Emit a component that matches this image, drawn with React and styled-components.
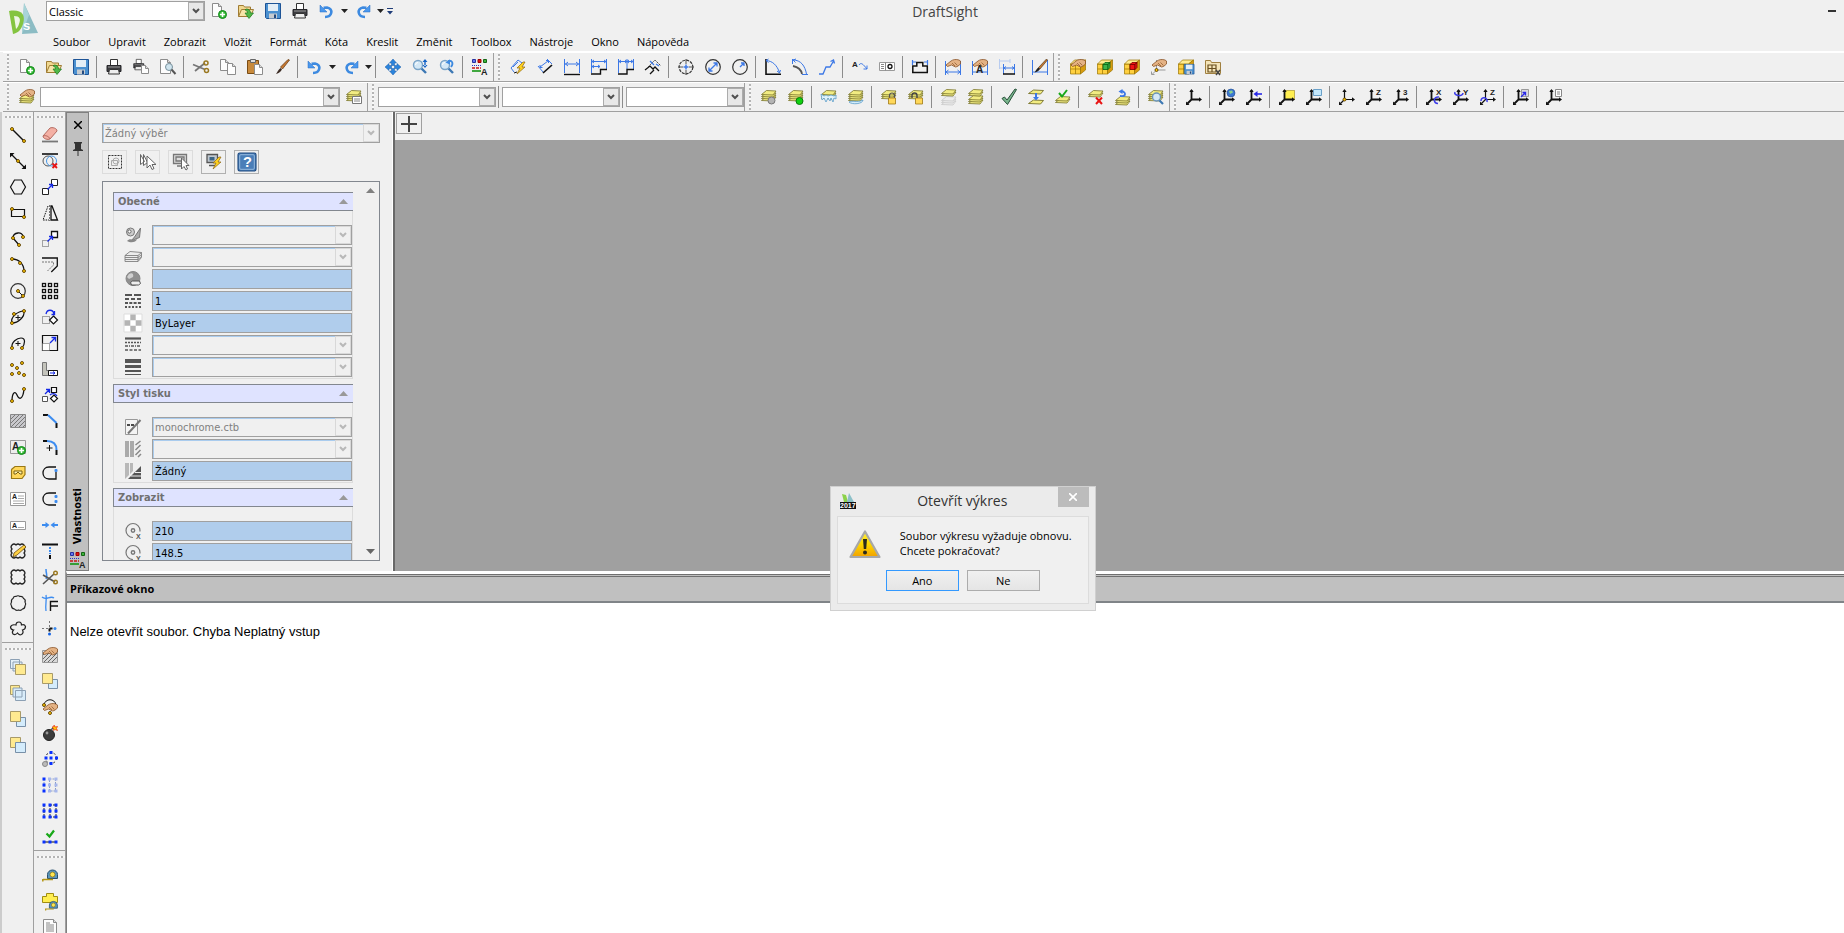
import React from 'react'
import styled, { createGlobalStyle } from 'styled-components'

/* ---------- icon building blocks, all on a 16x16 grid ---------- */

const BLUE = '#3c78e6'

const Dot = ({ x, y }) => <circle cx={x} cy={y} r="1.5" fill="#ffc800" stroke="#5a3c00" strokeWidth=".9" />

const Txt = ({ x, y, s = 7, c = '#222', children }) => (
  <text x={x} y={y} fontSize={s} fontWeight="bold" fill={c} stroke="none" fontFamily="Liberation Sans, sans-serif">{children}</text>
)

const Line = ({ d, c = '#111', w = 1, dash, f = 'none' }) => (
  <path d={d} fill={f} stroke={c} strokeWidth={w} strokeDasharray={dash} />
)

const Plus = () => (
  <g>
    <circle cx="11.5" cy="11.5" r="4" fill="#34b836" stroke="#128a1a" />
    <Line d="M11.5 9v5M9 11.5h5" c="#fff" w={1.6} />
  </g>
)

const Page = ({ x = 1, y = 0, w = 10, h = 14 }) => (
  <g transform={`translate(${x} ${y})`}>
    <path d={`M.5 .5h${w - 4}l3 3v${h - 4}h-${w - 1}z`} fill="#fdfdfd" stroke="#8c8c8c" />
    <path d={`M${w - 3.5} .5v3h3`} fill="#ddd" stroke="#8c8c8c" />
  </g>
)

const Printer = () => (
  <g>
    <path d="M4.5 .5h7v6h-7z" fill="#fff" stroke="#333" />
    <path d="M1 6.5h14v6h-14z" fill="#3c3c40" stroke="#26262a" />
    <path d="M2 8h12" stroke="#9a9a9a" />
    <path d="M3.5 10.5h9l1 4.5h-11z" fill="#eee" stroke="#333" />
  </g>
)

const Glass = () => (
  <g>
    <Line d="M9 9l5 5" c="#3c78b4" w={2.4} />
    <circle cx="6" cy="6" r="4.5" fill="#d4e8f6" stroke="#7aa4c8" strokeWidth="1.4" />
    <path d="M3.5 6a2.5 2.5 0 0 1 2.5-2.5" stroke="#fff" fill="none" />
  </g>
)

const Bolt = () => <path d="M13 3l-6 6h3l-3 6l8-7h-3l3-5z" fill="#ffd21e" stroke="#8c6414" strokeWidth=".7" />

const Hand = ({ y = 0 }) => (
  <g transform={`translate(0 ${y})`}>
    <path d="M1 6l5-4c2-1.5 5-2 8-1l1.5 1v3l-3 2.5l-2 .5l-4-2l-4 1.5z" fill="#e4b284" stroke="#8a5428" strokeWidth=".8" />
    <path d="M7 4l3 3M9.5 3.5l3 3" stroke="#8a5428" strokeWidth=".7" />
  </g>
)

const Stack = ({ y = 0, n = 4, c = '#f2ec82', e = '#77722a' }) => (
  <g transform={`translate(0 ${y})`}>
    {Array.from({ length: n }, (_, i) => n - 1 - i).map(i => (
      <path key={i} d={`M.5 ${5.5 + i * 2}l5-4l9.5 .5l-3 4z`} fill={c} stroke={e} strokeWidth=".8" />
    ))}
  </g>
)

const Sheet = ({ y = 0, c = '#f2ec82', e = '#77722a' }) => (
  <path d={`M.5 ${y + 4.5}l5-3.5l10 .5l-3 3.5z`} fill={c} stroke={e} strokeWidth=".9" />
)

const Lock = () => (
  <g>
    <path d="M8.5 9V6.5a2.5 2.5 0 0 1 5 0V9" fill="none" stroke="#555" strokeWidth="1.2" />
    <path d="M7.5 9h7v6h-7z" fill="#ffd85a" stroke="#a07814" strokeWidth=".8" />
  </g>
)

const Cube = () => (
  <g stroke="#9a7400" strokeWidth=".7">
    <path d="M.5 5h10v10h-10z" fill="#ffd040" />
    <path d="M.5 5l4-4h11l-5 4z" fill="#ffec90" />
    <path d="M10.5 5l5-4v10l-5 4z" fill="#d89c10" />
    <path d="M5.5 5v10M.5 10h10" fill="none" />
  </g>
)

const SmallCube = ({ c, d }) => (
  <g stroke={d} strokeWidth=".8">
    <path d="M6 5.5h5v5h-5z" fill={c} />
    <path d="M6 5.5l2-2h5l-2 2zM11 5.5l2-2v5l-2 2z" fill={c} />
  </g>
)

const Axes = ({ thin }) => (
  <g>
    <Line d="M5.5 1v9.5h8.5M5.5 10.5L1.5 14.5" w={thin ? 1.2 : 1.8} />
    <path d="M5.5 0l2.2 3h-4.4zM16 10.5l-3 2.2v-4.4zM0 16v-3.5l3.5 3.5z" fill="#111" />
  </g>
)

const Undo = () => (
  <g>
    <path d="M6 14c7 0 9-8 2-9.5l-3.5 .2" fill="none" stroke="#3d8ae0" strokeWidth="2.6" />
    <path d="M1 2v7h7z" fill="#4a98ee" stroke="#2a6cc0" strokeWidth=".5" />
  </g>
)

const Swatches = () => (
  <g>
    <path d="M.5 .5h3v3h-3z" fill="#6478f0" stroke="#2832a0" />
    <path d="M6 .5h3v3h-3z" fill="#e01414" stroke="#a00000" />
    <path d="M11.5 .5h3v3h-3z" fill="#3cb43c" stroke="#146414" />
    <Line d="M0 6.5h9" c="#2832c8" dash="1 1" />
    <Line d="M0 9h9" c="#c81414" w={1.4} dash="3 1" />
    <Line d="M0 12h9" c="#149614" w={1.6} />
    <Txt x={9} y={15.5} s={9}>A</Txt>
  </g>
)

const Floppy = ({ x = 0, y = 0, k = 1 }) => (
  <g transform={`translate(${x} ${y}) scale(${k})`}>
    <path d="M.5 .5h15v15h-14l-1-1z" fill="#4a90d0" stroke="#1e5496" />
    <path d="M3 1h10v7h-10z" fill="#e4eef6" />
    <path d="M4 10.5h8v5h-8z" fill="#c8ccd0" />
    <path d="M9 11.5h2v3.5h-2z" fill="#224a80" />
  </g>
)

const Tape = () => (
  <g>
    <path d="M5.5 11.5v-4a5 4.5 0 0 1 10 0v4z" fill="#5a96be" stroke="#28506e" />
    <circle cx="10.5" cy="7.5" r="2.5" fill="#ffe650" stroke="#806a10" strokeWidth=".7" />
    <Line d="M1 12.5h10M.8 12v2.5" c="#b49614" w={1.5} />
  </g>
)

const Nodes = ({ pts, c = '#0a32ff' }) => pts.map(([x, y]) => <rect key={`${x}-${y}`} x={x} y={y} width="3" height="3" fill={c} />)

const Cloud = ({ d }) => <path d={d} fill="none" stroke="#222" strokeWidth="1.2" />

const icons = {
  new: <><Page /><Plus /></>,
  open: <>
    <path d="M.5 13.5v-11h5l1 1.5h6v3" fill="#f0d890" stroke="#a07c34" />
    <path d="M.5 13.5l3-7h12l-3 7z" fill="#f6e4a8" stroke="#a07c34" />
    <path d="M8 6c3 0 4.5 1.5 4.5 4h3l-4.5 5.5l-4-5.5h2.5c0-2-1-2.5-2.5-3z" fill="#50b848" stroke="#1e7820" strokeWidth=".7" />
  </>,
  save: <Floppy />,
  print: <Printer />,
  printMany: <><g transform="scale(.72)"><Printer /></g><Page x={8} y={6} w={8} h={9} /></>,
  preview: <><Page x={0} w={11} h={15} /><circle cx="9" cy="8" r="3.5" fill="#cfe4ee" stroke="#78909c" /><Line d="M11.5 10.5l4 4.5" c="#555" w={2} /></>,
  cut: <><Line d="M0 5.5l12 5M2 12L12 4" c="#777" w={1.8} /><circle cx="13" cy="4" r="2" fill="none" stroke="#9a7820" strokeWidth="1.5" /><circle cx="13.5" cy="11.5" r="2" fill="none" stroke="#9a7820" strokeWidth="1.5" /></>,
  copy: <><Page x={0} y={0} w={9} h={12} /><Page x={7} y={4} w={9} h={12} /></>,
  paste: <><path d="M.5 1.5h11v13h-11z" fill="#c88a3c" stroke="#7a4c14" /><path d="M3.5 .5h5v3h-5z" fill="#ddd" stroke="#666" /><Page x={7} y={5} w={9} h={11} /></>,
  brush: <><path d="M15.5 1l-7 9l-2-2l7.5-7.5z" fill="#c87830" stroke="#5a3410" strokeWidth=".7" /><path d="M6.5 9l1.500 1.5c-2 3-4 4-6 4.5c1.500-2 2-4 4.500-6z" fill="#3c2c24" /></>,
  undo: <Undo />,
  redo: <g transform="translate(16 0) scale(-1 1)"><Undo /></g>,
  pan: <path d="M8 0l3.5 4h-2v2.5h-3V4h-2zM8 16l3.5-4h-2V9.5h-3V12h-2zM0 8l4-3.5v2h2.5v3H4v2zM16 8l-4-3.5v2H9.5v3H12v2z" fill="#2c84dc" stroke="#1c5ea8" strokeWidth=".5" />,
  zoomUpDown: <><Glass /><path d="M13 0l2.5 3h-5zM13 9l2.5-3h-5zM12.3 2h1.4v5h-1.4z" fill="#1464c8" /></>,
  zoomBack: <><Glass /><Line d="M9 2c4-1 6 2 3 6" c="#3d8ae0" w={1.8} /><path d="M6.5 3.5l4.5-3v5z" fill="#3d8ae0" /></>,
  swatches: <Swatches />,

  dimSmart: <><Line d="M1 9L8 1M1 9l3 4M8 1l4 3M3 8l5-5" c={BLUE} /><Line d="M4 14l3-1" /><Bolt /></>,
  dimAligned: <><Line d="M1 7l5 6M10 0l5 5M3 8l8-6M9 1.5h2.5V4M3 6v2.5h2.5" c={BLUE} /><Line d="M6 14l9-8" w={1.6} /></>,
  dimLinear: <><Line d="M.5 0v14M15.5 0v14M1 5h14M4 3L1.5 5L4 7M12 3l2.5 2L12 7" c={BLUE} /><Line d="M0 15.5h16" w={1.4} /></>,
  dimBase: <><Line d="M.5 0v14M15.5 0v10M1 2.5h14M1 7.5h8M3 1L1 2.5L3 4M13 1l2 1.5l-2 1.5M3 6L1 7.5L3 9M7 6l2 1.5L7 9" c={BLUE} /><Line d="M0 15h9.5V10.5H16" w={1.4} /></>,
  dimCont: <><Line d="M.5 0v14M9 0v10M15.5 0v10M1 2.5h14M3 1L1 2.5L3 4M7 1l2 1.5L7 4M11 1L9 2.5L11 4M13 1l2 1.5l-2 1.5" c={BLUE} /><Line d="M0 15h9V10.5H16" w={1.4} /></>,
  dimOblique: <><Line d="M0 11l5-4l3 3l2-2l4 4M5 15L9 11" w={1.3} /><Line d="M3 8l7-7l6 6" dash="2 1" c="#444" /><Line d="M5 2l4 4M11 5l3 2" c={BLUE} w={1.2} /></>,
  dimCenter: <><circle cx="8" cy="8" r="6.8" fill="none" stroke="#333" strokeWidth="1.2" strokeDasharray="3 1" /><Line d="M8 0v5M8 11v5M0 8h5M11 8h5" c="#555" /><Line d="M5.5 8h5M8 5.5v5" c={BLUE} w={1.5} /></>,
  dimDiameter: <><circle cx="8" cy="8" r="7.3" fill="none" stroke="#333" strokeWidth="1.2" /><Line d="M4 12l8-8M8.5 4H12v3.5M4 8.5V12h3.5" c={BLUE} w={1.3} /></>,
  dimRadius: <><circle cx="8" cy="8" r="7.3" fill="none" stroke="#333" strokeWidth="1.2" /><Line d="M8 8l4-4M9 4h3v3" c={BLUE} w={1.3} /></>,
  dimAngle: <><Line d="M1 0v15.3h15" w={1.6} /><Line d="M1 1.5c7 .5 11 5 13.5 12M3.5 0L1 1.5l2.5 2M12 12l2.5 2l1-3" c={BLUE} /></>,
  dimArc: <><Line d="M1 7c5 1 8 3 9 8" c="#555" w={1.8} /><Line d="M1 1c8 0 12 6 13.5 14M.5 0v5M10 15.5h6M4 0L1 1l2.5 2.5" c={BLUE} /></>,
  dimJog: <Line d="M0 15h4L7 8h4l3.5-6M11.5 2.5L14.5 1l1 3.5" c={BLUE} w={1.3} />,
  leader: <><Txt x={0} y={8} s={8}>A</Txt><Line d="M7 6c2-3 4-1 8 4M15 6.5V10h-3.500" c={BLUE} /></>,
  tolerance: <><path d="M.5 3.5h15v8h-15z" fill="#fff" stroke="#999" /><Line d="M2 5.5h3M2 7.5h3M2 9.5h3M6.5 3.5v8" c="#888" /><circle cx="11" cy="7.5" r="2" fill="none" stroke="#111" strokeWidth="1.3" /></>,
  dimJogLine: <><Line d="M0 13.5h16M.8 13v-6h4v-3.5h6V7h4.5v6" w={1.5} /><Line d="M.5 1v5M15.5 1v5M1 3h3M12 3h3" c={BLUE} w={1.2} /></>,
  dimEdit: <><Line d="M.5 2v14M15.5 2v14M1 13h14M3.5 11L1 13l2.5 2M12.5 11l2.5 2l-2.5 2" c={BLUE} /><Hand /></>,
  dimTextEdit: <><Line d="M.5 2v14M15.5 2v14M1 13h14" c={BLUE} /><Hand /><Txt x={4} y={14} s={10}>A</Txt></>,
  dimUpdate: <><Line d="M.5 0v10M11 0v4M1 2h10M1 9h4" c="#b8ccf0" /><Line d="M4.5 5v10M15.5 5v10M5 9h10M7 7.5L5 9l2 1.5M13 7.5L15 9l-2 1.5" c={BLUE} /><Line d="M4 15h12" w={1.5} /></>,
  dimStyle: <><Line d="M.5 1v15M15.5 1v15M1 13h14" c={BLUE} /><path d="M14.500 0l1 1L8 10L6.500 8.500z" fill="#c87830" stroke="#3c2c14" strokeWidth=".6" /><path d="M6.500 8.500L8 10c-1 2-3 3-5.500 3.500c1.500-2 2-4 4-5z" fill="#222" /></>,

  cubeHand: <><Cube /><Hand /></>,
  cubeGreen: <><Cube /><SmallCube c="#3cb44a" d="#0a6414" /></>,
  cubeRed: <><Cube /><SmallCube c="#f01414" d="#780000" /></>,
  origin: <><Line d="M5.5 1v10h9M5.5 11l-4 4M.5 12.500v3h3" c="#999" /><Hand /><Dot x={5.5} y={11} /></>,
  cubeSave: <><Cube /><Floppy x={6} y={5} k={0.65} /></>,
  cubeX: <><path d="M.5 14.5v-13h5l1 2h9v11z" fill="#f4e4b8" stroke="#a08040" /><path d="M3 6h8v7h-8zM7 6v7M3 9.5h8" fill="none" stroke="#6a5020" strokeWidth="1.2" /><Line d="M11 11l4 5M15 11l-4 5" c="#444" w={1.5} /></>,

  layerHand: <><Stack y={4} n={3} /><Hand /></>,
  layerProps: <><Stack y={0} n={4} /><path d="M6.5 7.5h9v7h-9z" fill="#fff" stroke="#777" /><Line d="M8 10h6M8 12h6" c="#888" /></>,
  layerOff: <><Stack y={0} n={4} /><circle cx="10.5" cy="11.5" r="3.5" fill="#b4b4b4" stroke="#777" /></>,
  layerOn: <><Stack y={0} n={4} /><circle cx="11.5" cy="12" r="3.5" fill="#10d010" stroke="#0a7a0a" /></>,
  layerFreeze: <><Stack y={0} n={3} /><path d="M0 5l3 2l2-1l2 1l3-1l3 1l2-1v4l-2-1l-1 4l-2-4l-1 3l-2-3l-2 4l-2-4l-2 2z" fill="#dff2fc" stroke="#5a9cc8" strokeWidth=".8" /></>,
  layerThaw: <><Stack y={0} n={4} /><path d="M1 13c3-2 8 1 14-2c0 4-11 5-14 2z" fill="#d4ecfa" stroke="#5a9cc8" strokeWidth=".8" /></>,
  layerLock: <><Stack y={0} n={3} /><Lock /></>,
  layerUnlock: <><Stack y={0} n={3} /><path d="M7.5 9h7v6h-7z" fill="#ffd85a" stroke="#a07814" strokeWidth=".8" /><Line d="M4 9V6.5a2.5 2.5 0 0 1 5 0V9" c="#444" w={1.4} /></>,
  layerIso: <><Stack y={6} n={3} c="#ececec" e="#c8c8c8" /><Stack y={-1} n={2} /></>,
  layerAll: <><Stack y={5} n={3} /><Stack y={-1} n={2} /></>,
  check: <path d="M1 9.5l2.5-1.5l2.5 3l8-11l1.5 .5l-9 15z" fill="#78b48c" stroke="#28503a" />,
  layerMerge: <><Sheet y={10} /><Sheet y={0} /><Line d="M8 4v5" c={BLUE} w={2} /><path d="M5 8h6l-3 3.5z" fill={BLUE} /></>,
  layerCheck: <><Stack y={6} n={2} /><Line d="M4 4l3 3.5l5-6.500" c="#18a818" w={2} /></>,
  layerDelete: <><Stack y={0} n={2} /><Line d="M8 8.500l6 6.5M14 8.500l-6 6.5" c="#e81414" w={2} /></>,
  layerBack: <><Stack y={6} n={3} /><Line d="M5 7c6 1 7-4 1-5" c={BLUE} w={1.8} /><path d="M3.5 2.5l4-2.5v5z" fill={BLUE} /></>,
  layerFind: <><Stack y={0} n={4} /><Line d="M11 11l4 4" c="#3c78b4" w={2.2} /><circle cx="8.5" cy="8" r="4" fill="#d4e8f6" stroke="#6a94b8" strokeWidth="1.4" /></>,

  ccs: <Axes />,
  ccsWorld: <><Axes /><circle cx="12" cy="4" r="4" fill="#3c78d2" stroke="#224a8c" strokeWidth=".6" /><path d="M10 2l3-.5l1 2l-3 1.5z" fill="#8cd28c" /></>,
  ccsPrev: <><Axes /><Line d="M9 5h7" c="#2828e8" w={1.6} /><path d="M7.5 5l4-3v6z" fill="#2828e8" /></>,
  ccsEntity: <><path d="M5.500 1.5h10v9h-10z" fill="#ffee50" stroke="#8a7000" strokeDasharray="1 1" /><Axes /></>,
  ccsView: <><Axes /><path d="M7.5 .5h8v6h-8z" fill="#c4e8fc" stroke="#6aa0c8" /></>,
  ccsOrigin: <><Axes thin /><Dot x={5.5} y={10.5} /></>,
  ccsZ: <><Axes /><Txt x={10} y={6} s={8}>Z</Txt></>,
  ccs3: <><Axes /><Txt x={10} y={6} s={8}>3</Txt></>,
  ccsRotX: <><Axes /><Txt x={10} y={6} s={8}>X</Txt><Line d="M13 8c-6-1-6 6-1 6.5" c="#3c3ce8" w={1.5} /></>,
  ccsRotY: <><Axes /><Txt x={10} y={6} s={8}>Y</Txt><Line d="M2 3c-2 4 8 5 8 1" c="#3c3ce8" w={1.5} /></>,
  ccsRotZ: <><Axes thin /><Txt x={10} y={6} s={8}>Z</Txt><Line d="M1 12c0-5 7-4 6 1" c="#3c3ce8" w={1.5} /></>,
  ccsApply: <><Axes /><path d="M8.5 .5h7v7h-7z" fill="#d8d8e0" stroke="#999" /><Line d="M8 8l4-4M9.500 3.500h3v3" c="#2828e8" w={1.3} /></>,
  ccsNamed: <><Axes /><path d="M9.5 .5h6v7h-6z" fill="#fff" stroke="#888" /><Line d="M11 3h3M11 5h3" c="#888" /></>,

  line: <><Line d="M2 2l12 12" w={1.4} /><Dot x={2} y={2} /><Dot x={14} y={14} /></>,
  infinite: <><Line d="M1 1l14 14" w={1.3} /><path d="M0 0h4.5l-4.5 4.5zM16 16v-4.5l-4.5 4.5z" fill="#111" /><Dot x={8} y={8} /></>,
  polygon: <Line d="M4.5 1h7l4 7l-4 7h-7l-4-7z" w={1.2} />,
  rect: <><Line d="M1.5 4.5h13v7h-13z" w={1.2} /><Dot x={2} y={4} /><Dot x={14} y={12} /></>,
  polyline: <><Line d="M9 14L3 7c0-6 10-7 10-1" w={1.3} /><Dot x={9} y={14} /><Dot x={3} y={7} /><Dot x={13} y={6} /></>,
  arc: <><Line d="M2 2c7 0 12 5 12 12" w={1.3} /><Dot x={2} y={2} /><Dot x={10} y={6} /><Dot x={14} y={14} /></>,
  circle: <><circle cx="8" cy="8" r="7.3" fill="none" stroke="#333" strokeWidth="1.2" /><Line d="M8 8l5 5" /><Dot x={8} y={8} /><Dot x={13} y={13} /></>,
  ellipse: <><Line d="M2 14c-2-6 6-12 12-12c1 6-6 12-12 12z" w={1.2} /><Line d="M8 6v5M5.5 8.5h5" /><Dot x={14} y={2} /><Dot x={2} y={14} /><Dot x={4} y={5} /></>,
  ellipseArc: <><Line d="M2 13c-1-6 5-10 9-10c5 0 4 6 1 10" w={1.2} /><Line d="M8 6v5M5.5 8.5h5" /><Dot x={2} y={13} /><Dot x={12} y={13} /></>,
  points: <><Dot x={2} y={4} /><Dot x={12} y={2} /><Dot x={7} y={7} /><Dot x={2} y={13} /><Dot x={9} y={12} /><Dot x={14} y={14} /></>,
  spline: <><Line d="M2 14C2 6 5 3 7 8s6 5 7-6" w={1.3} /><Dot x={2} y={14} /><Dot x={14} y={2} /></>,
  hatch: <><path d="M.5 1.5h15v13h-15z" fill="#c8c8cc" stroke="#888" /><Line d="M1 6l4-4M1 10l8-8M1 14l12-12M5 14L15 4M9 14l6-6M13 14l2-2" c="#777" /></>,
  noteAdd: <><path d="M.5 1.5h15v13h-15z" fill="#eee" stroke="#999" /><Txt x={2} y={11} s={10}>A</Txt><Plus /></>,
  block: <><path d="M2 4l3-2.5h10v8l-3 4H1.5V5z" fill="#ffd75a" stroke="#9a7814" strokeWidth="1.2" /><path d="M4 9v-3h8v3h-2l-2-2l-2 2z" fill="#fff3b0" stroke="#7a6010" /></>,
  note: <><path d="M.5 1.5h15v13h-15z" fill="#fff" stroke="#999" /><Txt x={2} y={8} s={7}>A</Txt><Line d="M8 5h6M8 7.5h6M3 10h11M3 12.5h11" c="#aaa" /></>,
  simpleNote: <><path d="M.5 4.5h15v8h-15z" fill="#fff" stroke="#999" /><Txt x={2} y={11} s={7}>A</Txt><Line d="M8 10.5h6" c="#aaa" /></>,
  sketch: <><Cloud d="M2 2q2-2 4 0q2-2 4 0q2-2 4 0q2 2 0 4q2 2 0 4q2 2 0 4q-2 2-4 0q-2 2-4 0q-2 2-4 0q-2-2 0-4q-2-2 0-4q-2-2 0-4" /><path d="M14 2l2 2L7 12l-4 2l1-4z" fill="#ffd040" stroke="#6a4c10" strokeWidth=".8" /></>,
  cloudRect: <Cloud d="M2 2q2-2 4 0q2-2 4 0q2-2 4 0q2 2 0 4q2 2 0 4q2 2 0 4q-2 2-4 0q-2 2-4 0q-2 2-4 0q-2-2 0-4q-2-2 0-4q-2-2 0-4" />,
  cloudRound: <Cloud d="M6 1.5q2-1.5 4 0q3-.5 3.5 2q2.5 1 1.5 3.5q1.5 2 0 4q0 2.5-2.5 3q-1.5 2-4 1q-2.5 1-4-1q-3-.5-3-3q-1.5-2 0-4q-.5-2.5 1.5-3.5q.5-2.5 3-2" />,
  cloudFree: <Cloud d="M6 4q0-3 3-3q2.5 0 2.5 3q3-1 4 1.5q0 3-3 3.5q1.5 3-1 4.5q-2.5 1-4-1.5q-2 2.5-4.5 1q-1.5-2 .5-4q-3-.5-3-3q1-3 5.500-2z" />,
  frontSq: <><path d="M6.5 6.5h9v9h-9z" fill="#d4ecfc" stroke="#7890a8" /><path d="M.5 .5h10v10h-10z" fill="#ffea90" stroke="#a89a68" /></>,
  backSq: <><path d="M.5 .5h10v10h-10z" fill="#ffea90" stroke="#a89a68" /><path d="M5.5 5.5h10v10h-10z" fill="#d4ecfc" stroke="#7890a8" /></>,
  aboveSq: <><path d="M.5 .5h9v9h-9zM3 3h9v9h-9z" fill="#e4f0f8" stroke="#8ca0b4" /><path d="M5.5 5.5h10v10h-10z" fill="#ffea90" stroke="#a89a68" /></>,
  underSq: <><path d="M.5 .5h9v9h-9z" fill="#ffea90" stroke="#a89a68" /><path d="M3 3h9v9h-9zM5.5 5.5h10v10h-10z" fill="#d8ecfa" stroke="#8ca0b4" /></>,

  eraser: <><path d="M1 9l7-8c2-1 7 0 7 3l-7 8c-2 1-7 0-7-3z" fill="#f4b0a4" stroke="#b46a60" /><path d="M1 9c2-1 6 0 7 3" fill="none" stroke="#b46a60" /><Line d="M0 14.5h16" c="#777" w={1.8} /></>,
  discard: <><Line d="M0 1h16" w={1.6} /><circle cx="6" cy="8" r="5" fill="none" stroke="#555" /><circle cx="9.5" cy="8" r="5" fill="none" stroke="#4696e6" /><Line d="M10.500 10.500l4.500 4.500M15 10.500l-4.500 4.500" c="#e81414" w={1.8} /></>,
  copyObj: <><path d="M.5 9.5h6v6h-6zM9.5 .5h6v6h-6z" fill="#fff" stroke="#222" /><Line d="M5.5 10.5L10.5 5.5M7 5.5h3.5V9" c="#1428e6" w={1.3} /></>,
  mirror: <><Line d="M6 1L1 15h6" dash="1.5 1" /><Line d="M7.5 0v16" c="#777" dash="2 1" /><path d="M9 1h1l5.5 14h-6.5z" fill="none" stroke="#111" strokeWidth="1.3" /></>,
  move: <><path d="M.5 9.5h6v6h-6z" fill="none" stroke="#555" strokeDasharray="1 1" /><path d="M9.5 .5h6v6h-6z" fill="#fff" stroke="#111" strokeWidth="1.3" /><Line d="M5.5 10.5L10.5 5.5M7 5.5h3.5V9" c="#1428e6" w={1.3} /></>,
  offset: <><Line d="M0 1h15.3v8l-6 6" w={1.3} /><Line d="M0 5h11.5v3l-6 6" c="#777" dash="2 1" /></>,
  pattern: <g fill="#fff" stroke="#111" strokeWidth="1.3">{[1, 7, 13].map(y => [1, 7, 13].map(x => <rect key={`${x}${y}`} x={x - 0.5} y={y - 0.5} width="3" height="3" />))}</g>,
  rotate: <><path d="M.5 7.5h7v7h-7z" fill="none" stroke="#555" strokeDasharray="1 1" /><path d="M11.5 7l4 4l-4 4l-4-4z" fill="#fff" stroke="#111" strokeWidth="1.2" /><Line d="M4 5c1-5 7-5 8 0M12.5 2v3.5h-3" c="#1428e6" w={1.3} /></>,
  scale: <><path d="M.5 .5h15v15h-15z" fill="none" stroke="#111" strokeWidth="1.2" /><path d="M.5 8.5h7v7h-7z" fill="#fff" stroke="#555" strokeDasharray="1 1" /><Line d="M8 8l5-5M9.5 2.5h4v4" c="#1428e6" w={1.3} /></>,
  stretch: <><path d="M.5 1.5h4v8h11v5h-15z" fill="#c4c4bc" stroke="#777" /><path d="M6.5 9.5h9v5h-9z" fill="#fff" stroke="#111" /><Line d="M8 12h5M11 10.5l2 1.5l-2 1.5" c="#1428e6" /></>,
  copyRotate: <><path d="M.5 9.5h5v5h-5z" fill="#fff" stroke="#555" /><path d="M9.5 .5h5v5h-5zM12 8l3.5 3.5L12 15l-3.5-3.5z" fill="#fff" stroke="#111" strokeWidth="1.2" /><Line d="M3 7l4-4M4 2.5h3.5V6M8 8c2-2 5-2 7 1" c="#1428e6" w={1.3} /></>,
  chamfer: <><Line d="M1 2h5M14.5 10v5" w={2} /><Line d="M6 2l8.5 8" c="#3c8cf0" w={2} /></>,
  fillet: <><Line d="M1 2h4M14.5 11v5" w={2} /><Line d="M5 2c6 0 9.5 3 9.5 9" c="#3c8cf0" w={2} /><Line d="M7.5 6v6M4.5 9h6" /></>,
  open1: <><Line d="M14 2H7C-1 2-1 14 7 14h7v-7" w={1.3} /><rect x="12.5" y="4" width="3" height="3" rx="1" fill="#3c8cf0" /></>,
  open2: <><Line d="M14 2H7C-1 2-1 14 7 14h7" w={1.3} /><rect x="12.5" y="4" width="3" height="3" rx="1" fill="#3c8cf0" /><rect x="12.5" y="9" width="3" height="3" rx="1" fill="#3c8cf0" /></>,
  weld: <><Line d="M0 8h5M11 8h5" c="#3c8cf0" w={2} /><path d="M3.5 5l4 3l-4 3zM12.5 5l-4 3l4 3z" fill="#3c8cf0" /></>,
  extend: <><Line d="M0 1.5h16" w={2} /><Line d="M8 4v7" c="#3c8cf0" w={2} dash="2 1" /><Line d="M8 12v4" w={2} /></>,
  trim: <><Line d="M4 0c0 6 2 6 0 10" c="#3c8cf0" w={1.5} /><Line d="M1 15L12 5M1 6l12 7" c="#555" w={1.6} /><circle cx="13.5" cy="4" r="1.8" fill="none" stroke="#9a7820" strokeWidth="1.4" /><circle cx="13.5" cy="13" r="1.8" fill="none" stroke="#9a7820" strokeWidth="1.4" /></>,
  powerTrim: <><Line d="M0 2c4 4 8-2 12 1M4 0c1 5-1 9 0 16" c="#3c8cf0" w={1.3} /><Line d="M16 6.5H8.5V16M16 11H8.5" w={1.4} /></>,
  corner: <><Line d="M7.5 0v16M0 7.5h16" c="#777" dash="2 2" /><Line d="M7.5 7.5h3M7.5 7.5v3" w={2} /><circle cx="13" cy="7.5" r="1.5" fill="#3c8cf0" /><circle cx="7.5" cy="13" r="1.5" fill="#1464e6" /></>,
  hatchEdit: <><path d="M.5 3.5h15v12h-15z" fill="#d8d8d8" stroke="#999" /><Line d="M1 8l4-4M1 12l8-8M2 15L13 4M6 15l9-9M10 15l5-5" c="#666" /><Hand /></>,
  polyEdit: <><Line d="M2 6c1-7 11-7 12 0" /><Hand y={4} /><Dot x={2} y={6} /><Dot x={8} y={14} /></>,
  bomb: <><circle cx="7" cy="10" r="5.5" fill="#3c3c3c" stroke="#222" /><circle cx="5" cy="8" r="1.4" fill="#999" /><Line d="M9 5l2-2l2 0" c="#555" w={1.5} /><path d="M12 0l1 2l2.5-.5l-1 2l1 2l-2.5-1l-1.5 1v-2l-1.5-1.5l2-.5z" fill="#ffc800" stroke="#e83214" strokeWidth=".7" /></>,
  circPattern: <><circle cx="9" cy="7" r="5.5" fill="none" stroke="#222" strokeDasharray="2 2" /><Nodes pts={[[7.5, 0], [2.5, 5.5], [7.5, 5.5], [13, 5.5], [7.5, 11]]} /><circle cx="3" cy="13" r="2.5" fill="#bbb" stroke="#888" /></>,
  gridLeft: <><Line d="M7.5 2h6v12h-6zM2 2v12" c="#8a9cc8" dash="2 1" /><Nodes c="#a8b8ec" pts={[[6, 0.5], [12.5, 0.5], [6, 6.5], [12.5, 6.5], [6, 12.5], [12.5, 12.5]]} /><Nodes pts={[[0.5, 0.5], [0.5, 6.5], [0.5, 12.5]]} /></>,
  gridAll: <><Line d="M2 2v12M8 2v12M14 2v12M8 2h6M8 14h6" c="#222" dash="2 1" /><Nodes pts={[[0.5, 0.5], [6.5, 0.5], [12.5, 0.5], [0.5, 6.5], [6.5, 6.5], [12.5, 6.5], [0.5, 12.5], [6.5, 12.5], [12.5, 12.5]]} /></>,
  gridCheck: <><Line d="M1 13h14" /><Nodes pts={[[0.5, 11.5], [6.5, 11.5], [12.5, 11.5]]} /><Line d="M4.5 4.5l3 3l4.5-6" c="#18a818" w={2.2} /></>,
  tape: <Tape />,
  tapeArea: <><path d="M4.5 .5h7v3h4v6h-15v-6h4z" fill="#ffee50" stroke="#a08c10" /><g transform="translate(3 6) scale(.8)"><Tape /></g></>,
  report: <><Page x={1} y={0} w={14} h={18} /><Line d="M4 4h4M4 6h8M4 8h8M4 10h8M4 12h8" c="#888" /></>,

  selRect: <><path d="M1.5 1.5h13v13h-13z" fill="none" stroke="#333" strokeDasharray="2 1" /><path d="M4.5 6.5h6v5h-6z" fill="none" stroke="#aaa" /><circle cx="9" cy="7" r="3" fill="none" stroke="#aaa" /></>,
  selArrows: <g fill="#fff" stroke="#666"><path d="M.5 .5v10l4-3zM3.5 .5v11l4-3z" /><path d="M7 2v12l3-3l2 4.5l2-1l-2-4h4z" /></g>,
  selWindow: <><path d="M.5 .5h13v9h-13zM3 3h8v4h-8zM4 12h5" fill="#ddd" stroke="#777" strokeWidth="1.3" /><path d="M8.5 4v11l2.5-2.5l2 3.5l1.5-1l-1.5-3.5h3z" fill="#fff" stroke="#666" /></>,
  selQuick: <><path d="M1 .5h10.500v8h-10.500z" fill="#c0c8d0" stroke="#555" strokeWidth="1.3" /><path d="M3.5 3h5v3.5h-5z" fill="#3c6484" /><Line d="M3 11.500h7" c="#555" w={1.5} /><Bolt /></>,
  help: <><rect x="0" y="0" width="16" height="16" rx="1.5" fill="#4a7eb8" stroke="#1e4a80" /><rect x="1.5" y="1.5" width="13" height="13" rx="1" fill="none" stroke="#a8c8e8" strokeWidth=".7" /><Txt x={4.5} y={12.5} s={13} c="#fff">?</Txt></>,

  color: <><circle cx="5.5" cy="5" r="4" fill="#ccc" stroke="#777" /><circle cx="4.5" cy="4.5" r="1.6" fill="#fff" stroke="#666" /><path d="M15.5 1l-6 9l-3 3.5l8-3z" fill="#aaa" stroke="#777" /><path d="M2 14c3-4 6 0 10-2c-1 4-7 4-10 2z" fill="#888" /></>,
  grayStack: <g fill="#ececec" stroke="#808080" strokeWidth=".9"><path d="M0 12.500v-6l5-4l11.500 1v5l-3.500 4z" /><path d="M0 6.500h13l3.500-3M13 6.500v6M0 8.500h13l3.500-3M0 10.500h13l3.500-3" fill="none" /></g>,
  globe: <><circle cx="8" cy="7.5" r="7" fill="#909090" stroke="#888" /><path d="M4 3c3-2 5 0 4 3l-4 2l-2-2z" fill="#d0d0d0" /><path d="M5.5 11.500l2-1.500h7l1 2.500l-2 1.500h-7z" fill="#eee" stroke="#555" /></>,
  lineScale: <g stroke="#555" strokeWidth="1.8"><path d="M0 2h16" strokeDasharray="7 2" /><path d="M0 6h16" strokeDasharray="4 2" /><path d="M0 10h16" strokeDasharray="3 1.3" /><path d="M0 14h16" strokeDasharray="2 1.5" /></g>,
  alpha: <><path d="M-1 -1h18v18h-18z" fill="#fff" stroke="#ddd" /><path d="M5.3 -.5h5.4v5.8h-5.4zM-.5 5.3h5.8v5.4h-5.8zM10.7 5.3h5.8v5.4h-5.8zM5.3 10.7h5.4v5.8h-5.4z" fill="#b4b4b4" /></>,
  lineStyle: <g stroke="#555" strokeWidth="1.6"><path d="M0 1.5h16" strokeWidth="2.2" /><path d="M0 5.5h16" strokeDasharray="2 1" /><path d="M0 9h16" strokeDasharray="3 1 1 1" /><path d="M0 13h16" strokeDasharray="3 1.5" /></g>,
  lineWeight: <path d="M0 0h16v4h-16zM0 6h16v3h-16zM0 11h16v2h-16zM0 15h16v1h-16z" fill="#555" />,
  printStyle: <><path d="M.5 .5h12v15h-12z" fill="#f4f4f4" stroke="#999" /><Line d="M2 6h3M6 6h3" w={1.6} /><Line d="M15.5 1L3 14.5" c="#777" w={2} /></>,
  bars: <><path d="M0 0h4v16H0zM5 0h4v16H5z" fill="#aaa" /><Line d="M10.5 4l5-4M10.5 9l5-5M10.5 14l5-5M13 16l3-3" c="#888" w={1.5} /></>,
  ramp: <><path d="M0 0h4v12l-4 4zM5 0h3v8l-3 3z" fill="#b8b8b8" /><path d="M16 3L3 16h13z" fill="#555" /><Line d="M10 9.500h6M6 13h10" c="#eee" /></>,
  centerX: <><circle cx="8" cy="7.5" r="7" fill="none" stroke="#777" strokeWidth="1.2" strokeDasharray="34 10" strokeDashoffset="-11" /><circle cx="8" cy="7.5" r="1.7" fill="none" stroke="#777" strokeWidth="1.4" /><Txt x={11} y={16} s={7} c="#555">X</Txt></>,
  centerY: <><circle cx="8" cy="7.5" r="7" fill="none" stroke="#777" strokeWidth="1.2" strokeDasharray="34 10" strokeDashoffset="-11" /><circle cx="8" cy="7.5" r="1.7" fill="none" stroke="#777" strokeWidth="1.4" /><Txt x={11} y={16} s={7} c="#555">Y</Txt></>,
}

const Icon = ({ name, size = 16 }) => (
  <svg width={size} height={size} viewBox="0 0 16 16" overflow="visible" fill="none" aria-hidden="true">{icons[name]}</svg>
)

/* ---------- toolbar contents: '|' is a separator, 'v' a drop-down arrow ---------- */

const standardBar = 'new open save | print printMany preview | cut copy paste brush | undo v redo v | pan zoomUpDown zoomBack | swatches'
const dimensionBar = 'dimSmart dimAligned dimLinear dimBase dimCont dimOblique | dimCenter dimDiameter dimRadius | dimAngle dimArc dimJog | leader tolerance | dimJogLine | dimEdit dimTextEdit dimUpdate | dimStyle'
const blockBar = 'cubeHand cubeGreen cubeRed origin cubeSave cubeX'
const layerBar = 'layerOff layerOn | layerFreeze layerThaw | layerLock layerUnlock | layerIso layerAll | check layerMerge layerCheck | layerDelete layerBack | layerFind'
const ccsBar = 'ccs | ccsWorld ccsPrev | ccsEntity ccsView | ccsOrigin ccsZ ccs3 | ccsRotX ccsRotY ccsRotZ | ccsApply | ccsNamed'

const drawBar = 'line infinite polygon rect polyline arc circle ellipse ellipseArc points spline hatch noteAdd block note simpleNote sketch cloudRect cloudRound cloudFree'
const orderBar = 'aboveSq underSq frontSq backSq'
const modifyBar = 'eraser discard copyObj mirror move offset pattern rotate scale stretch copyRotate chamfer fillet open1 open2 weld extend trim powerTrim corner hatchEdit frontSq polyEdit bomb circPattern gridLeft gridAll gridCheck'
const inquiryBar = 'tape tapeArea report'

const menus = ['Soubor', 'Upravit', 'Zobrazit', 'Vložit', 'Formát', 'Kóta', 'Kreslit', 'Změnit', 'Toolbox', 'Nástroje', 'Okno', 'Nápověda']

const groups = [
  {
    title: 'Obecné',
    rows: [
      { icon: 'color', combo: true },
      { icon: 'grayStack', combo: true },
      { icon: 'globe', value: '' },
      { icon: 'lineScale', value: '1' },
      { icon: 'alpha', value: 'ByLayer' },
      { icon: 'lineStyle', combo: true },
      { icon: 'lineWeight', combo: true },
    ],
  },
  {
    title: 'Styl tisku',
    rows: [
      { icon: 'printStyle', combo: true, value: 'monochrome.ctb' },
      { icon: 'bars', combo: true },
      { icon: 'ramp', value: 'Žádný' },
    ],
  },
  {
    title: 'Zobrazit',
    rows: [
      { icon: 'centerX', value: '210' },
      { icon: 'centerY', value: '148.5' },
    ],
  },
]

function Items({ list }) {
  return list.split(' ').map((name, i) => {
    if (name === '|') return <Separator key={i} />
    if (name === 'v') return <DropArrow key={i} aria-label="more"><svg width="7" height="4"><path d="M0 0h7l-3.5 4z" fill="#222" /></svg></DropArrow>
    return <ToolButton key={i} aria-label={name}><Icon name={name} /></ToolButton>
  })
}

function ComboBox({ label, value = '', width, disabled, fill }) {
  return (
    <Combo $width={width} $disabled={disabled} $fill={fill}>
      <ComboSelect aria-label={label} disabled={disabled} defaultValue={value}>
        <option>{value}</option>
      </ComboSelect>
      <ComboArrow $disabled={disabled}>
        <svg width="8" height="6"><path d="M1 1l3 3l3-3" fill="none" stroke={disabled ? '#b8b8b8' : '#505050'} strokeWidth="2" /></svg>
      </ComboArrow>
    </Combo>
  )
}

function Properties() {
  return (
    <Palette>
      <PaletteStrip>
        <StripButton aria-label="close">
          <svg width="8" height="8"><path d="M0 0l8 8M8 0l-8 8" stroke="#000" strokeWidth="1.5" /></svg>
        </StripButton>
        <StripButton aria-label="pin">
          <svg width="10" height="14"><path d="M1 0h8v1l-1 1v5l2 1v1H0V8l2-1V2L1 1zM4.5 9h1v5h-1z" fill="#333" /></svg>
        </StripButton>
        <StripTitle>Vlastnosti</StripTitle>
        <Icon name="swatches" />
      </PaletteStrip>
      <PaletteBody>
        <ComboBox label="selection" value="Žádný výběr" disabled fill />
        <SelectTools>
          <SelectButton disabled aria-label="select by window"><Icon name="selRect" /></SelectButton>
          <SelectButton disabled aria-label="select many"><Icon name="selArrows" /></SelectButton>
          <SelectButton disabled aria-label="select entities"><Icon name="selWindow" /></SelectButton>
          <SelectButton aria-label="quick select"><Icon name="selQuick" /></SelectButton>
          <SelectButton aria-label="help"><Icon name="help" size={18} /></SelectButton>
        </SelectTools>
        <GroupFrame>
          <GroupList>
            {groups.map(group => (
              <Group key={group.title}>
                <GroupHeader>
                  {group.title}
                  <svg width="9" height="5"><path d="M4.5 0l4.5 5h-9z" fill="#999" /></svg>
                </GroupHeader>
                <GroupRows>
                  {group.rows.map(row => (
                    <PropRow key={row.icon}>
                      <PropIcon><Icon name={row.icon} /></PropIcon>
                      {row.combo
                        ? <ComboBox label={row.icon} value={row.value} disabled fill />
                        : <PropInput aria-label={row.icon} defaultValue={row.value} />}
                    </PropRow>
                  ))}
                </GroupRows>
              </Group>
            ))}
          </GroupList>
          <Scroller>
            <svg width="9" height="5"><path d="M4.5 0l4.5 5h-9z" fill="#808080" /></svg>
            <svg width="9" height="5"><path d="M4.5 5l4.5-5h-9z" fill="#666" /></svg>
          </Scroller>
        </GroupFrame>
      </PaletteBody>
    </Palette>
  )
}

function RecoverDialog() {
  return (
    <Dialog role="dialog" aria-labelledby="dialog-title">
      <DialogBar>
        <svg width="18" height="18" viewBox="0 0 18 18">
          <path d="M3 1l4 1l2 7H5z" fill="#8cd24a" />
          <path d="M10 0l5 9H8z" fill="#8cc0c8" />
          <path d="M1 9h16v7H1z" fill="#111" />
          <text x="1" y="15" fontSize="7" fontWeight="bold" fill="#fff" fontFamily="Liberation Sans, sans-serif">2017</text>
        </svg>
        <DialogTitle id="dialog-title">Otevřít výkres</DialogTitle>
        <DialogClose aria-label="close">
          <svg width="8" height="8"><path d="M0 0l8 8M8 0l-8 8" stroke="#fff" strokeWidth="1.6" /></svg>
        </DialogClose>
      </DialogBar>
      <DialogBody>
        <Message>
          <svg width="32" height="29" viewBox="0 0 32 29">
            <defs>
              <linearGradient id="warn" x1="0" y1="0" x2="0" y2="1">
                <stop offset="0" stopColor="#fff03c" />
                <stop offset=".5" stopColor="#ffd800" />
                <stop offset="1" stopColor="#f0a000" />
              </linearGradient>
            </defs>
            <path d="M16 1.5L30.5 27h-29z" fill="url(#warn)" stroke="#a8a8a8" strokeWidth="2.2" strokeLinejoin="round" />
            <path d="M14 9h4l-.8 10h-2.4z" fill="#2a2a1e" />
            <circle cx="16" cy="22.5" r="2" fill="#2a2a1e" />
          </svg>
          <p>Soubor výkresu vyžaduje obnovu.<br />Chcete pokračovat?</p>
        </Message>
        <DialogButtons>
          <PushButton $primary>Ano</PushButton>
          <PushButton>Ne</PushButton>
        </DialogButtons>
      </DialogBody>
    </Dialog>
  )
}

function App() {
  return (
    <Window>
      <GlobalStyle />
      <Header>
        <Logo width="32" height="34" viewBox="0 0 32 34">
          <path d="M16 0l14 30l-16 1z" fill="#8cbcc4" />
          <path d="M16 0l5 12l-7 19z" fill="#a8d4d8" />
          <path d="M1 8c12-2 17 3 14 13c-2 6-5 9-10 10z" fill="#84c440" />
          <path d="M6 13c6 0 7 3 5 8c-1 3-2 4-3 5z" fill="#eef6e6" />
          <text x="15" y="27" fontSize="13" fontWeight="bold" fill="#fff" fontFamily="Liberation Sans, sans-serif">s</text>
        </Logo>
        <HeaderRows>
          <TitleRow>
            <QuickTools>
              <ComboBox label="workspace" value="Classic" width={159} />
              <Items list="new open save print undo v redo v" />
              <DropArrow aria-label="customize">
                <svg width="6" height="7"><path d="M0 0h6v1h-6zM0 3h6l-3 3.5z" fill="#1e3c78" /></svg>
              </DropArrow>
            </QuickTools>
            <AppTitle>DraftSight</AppTitle>
            <WindowTools>
              <MinButton aria-label="minimize"><svg width="8" height="2"><path d="M0 0h8v2h-8z" fill="#333" /></svg></MinButton>
            </WindowTools>
          </TitleRow>
          <MenuBar>
            {menus.map(menu => <MenuItem key={menu} href="#">{menu}</MenuItem>)}
          </MenuBar>
        </HeaderRows>
      </Header>
      <ToolRow>
        <ToolGroup><Grip /><Items list={standardBar} /></ToolGroup>
        <ToolGroup><Grip /><Items list={dimensionBar} /></ToolGroup>
        <ToolGroup $last><Grip /><Items list={blockBar} /></ToolGroup>
      </ToolRow>
      <ToolRow>
        <ToolGroup>
          <Grip />
          <Items list="layerHand" />
          <ComboBox label="layer" width={300} />
          <Items list="layerProps" />
        </ToolGroup>
        <ToolGroup>
          <Grip />
          <ComboBox label="color" width={118} />
          <Separator />
          <ComboBox label="line style" width={118} />
          <Separator />
          <ComboBox label="line weight" width={118} />
        </ToolGroup>
        <ToolGroup><Grip /><Items list={layerBar} /></ToolGroup>
        <ToolGroup $last><Grip /><Items list={ccsBar} /></ToolGroup>
      </ToolRow>
      <Main>
        <SideColumn>
          <SideGroup><Grip $flat /><Items list={drawBar} /></SideGroup>
          <SideGroup $last><Grip $flat /><Items list={orderBar} /></SideGroup>
        </SideColumn>
        <SideColumn>
          <SideGroup><Grip $flat /><Items list={modifyBar} /></SideGroup>
          <SideGroup $last><Grip $flat /><Items list={inquiryBar} /></SideGroup>
        </SideColumn>
        <Workspace>
          <Upper>
            <Properties />
            <Drawing>
              <TabBar>
                <TabButton aria-label="new drawing">
                  <svg width="16" height="16"><path d="M7 0h2v7h7v2h-7v7h-2v-7h-7v-2h7z" fill="#444" /></svg>
                </TabButton>
              </TabBar>
            </Drawing>
          </Upper>
          <CommandWindow>
            <CommandTitle>Příkazové okno</CommandTitle>
            <CommandText>Nelze otevřít soubor. Chyba Neplatný vstup</CommandText>
          </CommandWindow>
        </Workspace>
      </Main>
      <RecoverDialog />
    </Window>
  )
}

const GlobalStyle = createGlobalStyle`
  * { box-sizing: border-box; }
  body {
    margin: 0;
    background: #f0f0f0;
    color: #000;
    font-family: 'Open Sans', 'Noto Sans', sans-serif;
    font-size: 11px;
  }
  button, input, select { font: inherit; color: inherit; }
  button { padding: 0; border: none; background: none; }
  svg { display: block; flex: none; }
  p { margin: 0; }
`

const Window = styled.div`
  position: relative;
  display: flex;
  flex-direction: column;
  height: 100vh;
  overflow: hidden;
`

const Header = styled.header`
  display: flex;
  height: 52px;
  flex: none;
  border-bottom: 1px solid #fff;
`

const Logo = styled.svg`
  margin: 3px 6px 0 8px;
`

const HeaderRows = styled.div`
  flex: 1;
`

const TitleRow = styled.div`
  display: grid;
  grid-template-columns: 1fr auto 1fr;
  grid-template-rows: 22px;
  align-items: center;
`

const QuickTools = styled.div`
  display: flex;
  align-items: center;
`

const AppTitle = styled.h1`
  margin: 2px 0 0;
  font-size: 14px;
  line-height: 20px;
  font-weight: normal;
  color: #444;
`

const WindowTools = styled.div`
  display: flex;
  justify-content: flex-end;
`

const MinButton = styled.button`
  padding: 0 8px;
`

const MenuBar = styled.nav`
  display: flex;
  gap: 18px;
  padding: 11px 0 0 7px;
`

const MenuItem = styled.a`
  color: #000;
  line-height: 18px;
  text-decoration: none;
`

const ToolRow = styled.div`
  display: flex;
  flex: none;
  height: 30px;
  margin-left: 3px;
  border-top: 1px solid #fff;
  border-bottom: 1px solid #a0a0a0;
`

const ToolGroup = styled.div`
  display: flex;
  align-items: center;
  border-right: ${p => p.$last ? 'none' : '1px solid #a0a0a0'};
`

const Grip = styled.div`
  flex: none;
  width: ${p => p.$flat ? '28px' : '2px'};
  height: ${p => p.$flat ? '2px' : '26px'};
  margin: ${p => p.$flat ? '4px 0 4px 2px' : '0 4px'};
  background: repeating-linear-gradient(${p => p.$flat ? '90deg' : '180deg'}, #b4b4b4 0 2px, #f8f8f8 2px 4px);
`

const ToolButton = styled.button`
  display: flex;
  align-items: center;
  justify-content: center;
  flex: none;
  width: 27px;
  height: 26px;
`

const DropArrow = styled.button`
  display: flex;
  justify-content: center;
  width: 9px;
`

const Separator = styled.div`
  width: 1px;
  height: 22px;
  margin: 0 3px 0 2px;
  background: #8c8c8c;
`

const Combo = styled.div`
  position: relative;
  flex: ${p => p.$fill ? '1' : 'none'};
  min-width: 0;
  width: ${p => p.$fill ? 'auto' : `${p.$width}px`};
  height: 20px;
  border: 1px solid #a0a0a0;
  background: ${p => p.$disabled ? '#f0f0f0' : '#fff'};
  box-shadow: ${p => p.$disabled ? 'inset 1px 1px #aaccee' : 'none'};
`

const ComboSelect = styled.select`
  appearance: none;
  display: block;
  width: 100%;
  height: 18px;
  padding: 0 18px 0 2px;
  border: none;
  background: transparent;
  &:disabled { color: #808080; opacity: 1; font-family: 'DejaVu Sans Condensed', 'DejaVu Sans', sans-serif; }
`

const ComboArrow = styled.span`
  position: absolute;
  top: 0;
  right: 0;
  display: flex;
  align-items: center;
  justify-content: center;
  width: 16px;
  height: 18px;
  border: 1px solid ${p => p.$disabled ? '#d8d8d8' : '#acacac'};
  background: ${p => p.$disabled ? '#f0f0f0' : '#e8e8e8'};
  pointer-events: none;
`

const Main = styled.main`
  display: flex;
  flex: 1;
  min-height: 0;
  border-left: 2px solid #ccc;
`

const SideColumn = styled.div`
  flex: none;
  width: 32px;
  overflow: hidden;
  border-right: 1px solid #a0a0a0;
`

const SideGroup = styled.div`
  display: flex;
  flex-direction: column;
  align-items: center;
  margin-bottom: 1px;
  border-bottom: ${p => p.$last ? 'none' : '1px solid #a0a0a0'};
`

const Workspace = styled.div`
  display: flex;
  flex-direction: column;
  flex: 1;
  min-width: 0;
`

const Upper = styled.div`
  display: flex;
  flex: 461 1 0;
  min-height: 0;
`

const Palette = styled.section`
  display: flex;
  flex: none;
  width: 329px;
  border-right: 2px solid #696969;
  box-shadow: inset -1px 0 #fff;
`

const PaletteStrip = styled.div`
  display: flex;
  flex-direction: column;
  align-items: center;
  width: 23px;
  padding-bottom: 2px;
  border: 1px solid #808080;
  background: #c0c0c0;
`

const StripButton = styled.button`
  height: 24px;
`

const StripTitle = styled.h2`
  margin: auto 0 8px;
  font-family: 'DejaVu Sans Condensed', 'DejaVu Sans', sans-serif;
  font-size: 11px;
  line-height: 14px;
  writing-mode: vertical-rl;
  transform: rotate(180deg);
`

const PaletteBody = styled.div`
  display: flex;
  flex-direction: column;
  flex: 1;
  min-width: 0;
  padding: 11px 13px 10px 13px;
  > ${Combo} { flex: none; }
`

const SelectTools = styled.div`
  display: flex;
  gap: 8px;
  padding: 7px 0;
`

const SelectButton = styled.button`
  display: flex;
  align-items: center;
  justify-content: center;
  width: 25px;
  height: 24px;
  border: 1px solid #b0b0b0;
  &:disabled { border-color: #dcdcdc; }
`

const GroupFrame = styled.div`
  display: flex;
  flex: 1;
  min-height: 0;
  padding-left: 10px;
  border: 1px solid #82878f;
  overflow: hidden;
`

const GroupList = styled.div`
  flex: 1;
  min-width: 0;
  padding-top: 10px;
`

const Group = styled.section`
  margin-bottom: 5px;
`

const GroupHeader = styled.h3`
  display: flex;
  align-items: center;
  justify-content: space-between;
  height: 19px;
  margin: 0;
  padding: 0 5px 0 4px;
  border: 1px solid #82878f;
  border-right: none;
  background: #dfe3ff;
  color: #707070;
  font-family: 'DejaVu Sans Condensed', 'DejaVu Sans', sans-serif;
  font-size: 11px;
`

const GroupRows = styled.div`
  display: flex;
  flex-direction: column;
  gap: 2px;
  padding: 14px 0 1px;
  border: 1px solid #dcdcdc;
  border-top: none;
`

const PropRow = styled.div`
  display: flex;
  height: 20px;
`

const PropIcon = styled.span`
  display: flex;
  align-items: center;
  justify-content: center;
  width: 38px;
`

const PropInput = styled.input`
  flex: 1;
  min-width: 0;
  height: 20px;
  padding: 0 2px;
  border: 1px solid #a0a0a0;
  background: #b0cdec;
  font-family: 'DejaVu Sans Condensed', 'DejaVu Sans', sans-serif;
`

const Scroller = styled.div`
  display: flex;
  flex-direction: column;
  align-items: center;
  justify-content: space-between;
  width: 18px;
  margin-left: 8px;
  padding: 6px 0;
`

const Drawing = styled.section`
  flex: 1;
  background: #a0a0a0;
`

const TabBar = styled.div`
  display: flex;
  height: 28px;
  padding: 1px;
  background: #f0f0f0;
`

const TabButton = styled.button`
  display: flex;
  align-items: center;
  justify-content: center;
  width: 26px;
  height: 21px;
  border: 1px solid #a0a0a0;
`

const CommandWindow = styled.section`
  flex: 360 1 0;
  min-height: 0;
  border-top: 3px solid #fff;
  border-left: 1px solid #808080;
  background: #fff;
`

const CommandTitle = styled.h2`
  height: 29px;
  margin: 0;
  padding: 2px 3px 0;
  border-top: 3px double #707070;
  border-bottom: 2px solid #808488;
  background: #c0c0c0;
  font-size: 11px;
  line-height: 20px;
`

const CommandText = styled.p`
  padding: 20px 3px;
  font-family: 'Liberation Sans', Arial, sans-serif;
  font-size: 13px;
  line-height: 18px;
`

const Dialog = styled.div`
  position: absolute;
  top: 486px;
  left: 45%;
  width: 266px;
  padding: 0 6px 6px;
  border: 1px solid #d0d0d0;
  background: #ebebeb;
`

const DialogBar = styled.div`
  display: flex;
  align-items: flex-start;
  height: 29px;
  > svg { margin: 6px 0 0 2px; }
`

const DialogTitle = styled.h2`
  flex: 1;
  margin: 3px 0 0;
  padding-left: 10px;
  color: #333;
  font-size: 14px;
  font-weight: normal;
  line-height: 22px;
  text-align: center;
`

const DialogClose = styled.button`
  display: flex;
  align-items: center;
  justify-content: center;
  width: 31px;
  height: 20px;
  background: #bcbcbc;
`

const DialogBody = styled.div`
  padding: 11px 11px 12px;
  border: 1px solid #dcdcdc;
  background: #f0f0f0;
`

const Message = styled.div`
  display: flex;
  align-items: center;
  gap: 19px;
  line-height: 15px;
  white-space: nowrap;
  > p { margin-bottom: 2px; }
`

const DialogButtons = styled.div`
  display: flex;
  gap: 8px;
  padding: 10px 0 0 37px;
`

const PushButton = styled.button`
  width: 73px;
  height: 21px;
  border: 1px solid ${p => p.$primary ? '#3399ff' : '#acacac'};
  background: linear-gradient(#f0f0f0, #e5e5e5);
`

export default App
